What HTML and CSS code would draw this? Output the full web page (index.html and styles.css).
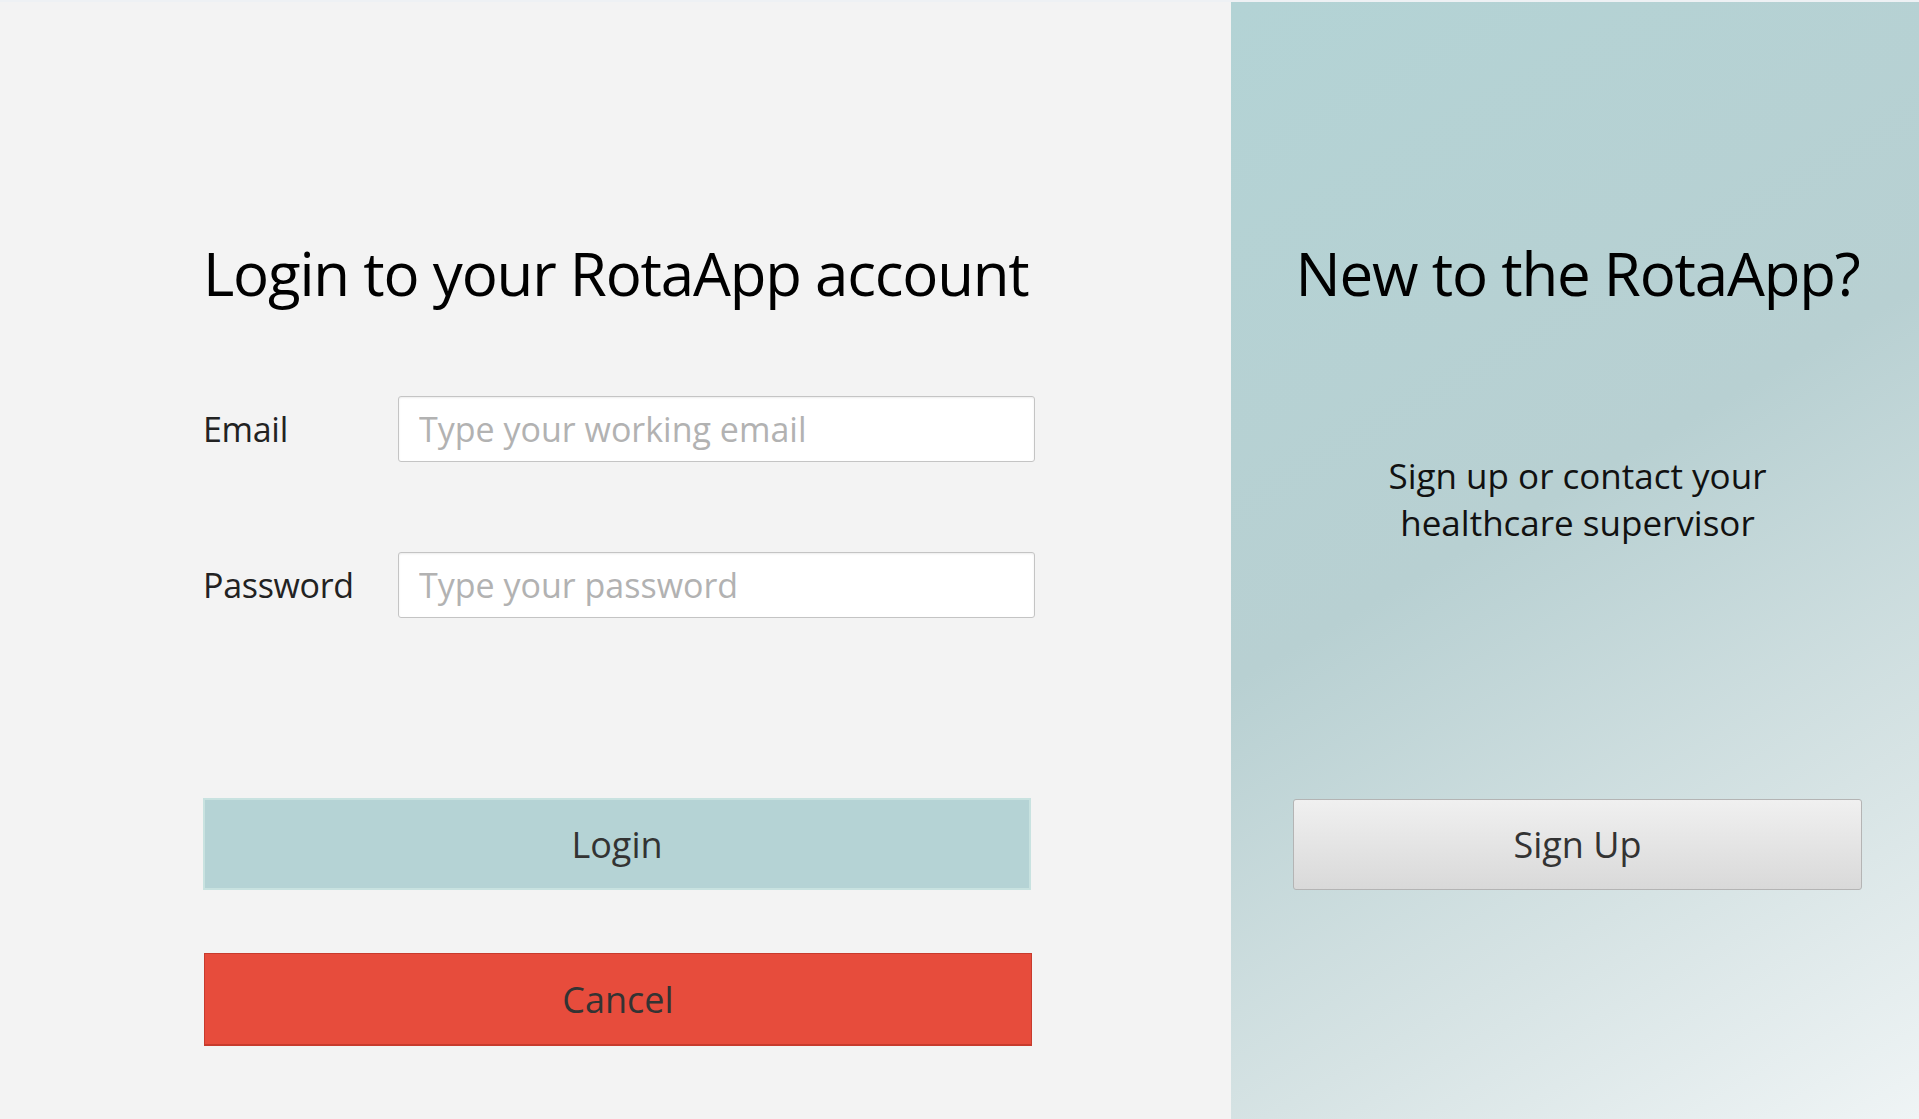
FILE: index.html
```html
<!DOCTYPE html>
<html>
<head>
  <title>RotaApp Login</title>
  <link rel="stylesheet" href="styles.css">
</head>
<body>
  <div class="page">
    <!-- Login form -->
    <div class="login-side">
      <h1 class="title">Login to your RotaApp account</h1>

      <div class="form-row">
        <label for="email">Email</label>
        <input type="text" id="email" placeholder="Type your working email" />
      </div>
      <div class="form-row">
        <label for="password">Password</label>
        <input type="password" id="password" placeholder="Type your password" />
      </div>

      <button class="btn btn-login">Login</button>
      <button class="btn btn-cancel">Cancel</button>
    </div>

    <!-- Sign up panel -->
    <div class="signup-side">
      <h1 class="title">New to the RotaApp?</h1>
      <p class="signup-text">Sign up or contact your<br>healthcare supervisor</p>
      <button class="btn btn-signup">Sign Up</button>
    </div>
  </div>
</body>
</html>
```

FILE: styles.css
```css
body {
  margin: 0;
  font-family: "Open Sans", "Noto Sans", sans-serif;
  background-color: #eef1f4;
  color: #333;
}

.page {
  display: flex;
  height: 1117px;
  margin-top: 2px;
  background-color: #f3f3f3;
}

.title {
  margin: 0;
  font-size: 60px;
  font-weight: 400;
  line-height: 72px;
  letter-spacing: -1.2px;
  color: #000;
  white-space: nowrap;
}

.login-side {
  flex: 0 0 1231px;
  box-sizing: border-box;
  padding: 235px 0 0 203px;
  display: flex;
  flex-direction: column;
}

.login-side .title {
  margin-bottom: 87px;
}

.form-row {
  display: flex;
  align-items: center;
  width: 832px;
  margin-bottom: 90px;
}

.form-row label {
  width: 195px;
  font-size: 34px;
  letter-spacing: -0.3px;
  color: #222;
}

.form-row input {
  width: 637px;
  height: 66px;
  box-sizing: border-box;
  padding: 0 20px;
  font-family: inherit;
  font-size: 34px;
  color: #333;
  background-color: #fff;
  border: 1px solid #c4c4c4;
  border-radius: 3px;
  box-shadow: inset 0 1px 2px rgba(0, 0, 0, 0.08);
  outline: none;
}

.form-row input::placeholder {
  color: #b2b2b2;
}

.btn {
  display: block;
  font-family: inherit;
  font-size: 36px;
  color: #333;
  cursor: pointer;
  padding: 0;
}

.btn-login {
  width: 828px;
  height: 92px;
  margin-top: 90px;
  background-color: #b5d3d5;
  border: 2px solid #c8e2e0;
}

.btn-cancel {
  width: 828px;
  height: 93px;
  margin-top: 63px;
  margin-left: 1px;
  background-color: #e74c3c;
  border: 1px solid #c73b2d;
  border-bottom-width: 2px;
}

.signup-side {
  flex: 1;
  min-width: 0;
  box-sizing: border-box;
  padding: 235px 57px 0 62px;
  display: flex;
  flex-direction: column;
  align-items: center;
  text-align: center;
  background: linear-gradient(150deg, #b3d3d5 0%, #b8d0d2 45%, #d6e3e4 75%, #eff4f5 100%);
}

.signup-text {
  margin: 143px 0 0 0;
  font-size: 35px;
  line-height: 47px;
  color: #111;
}

.btn-signup {
  width: 569px;
  height: 91px;
  margin-top: 253px;
  background: linear-gradient(#f0f0f0, #d9d9d9);
  border: 1px solid #b4b4b4;
  border-radius: 3px;
}
```
